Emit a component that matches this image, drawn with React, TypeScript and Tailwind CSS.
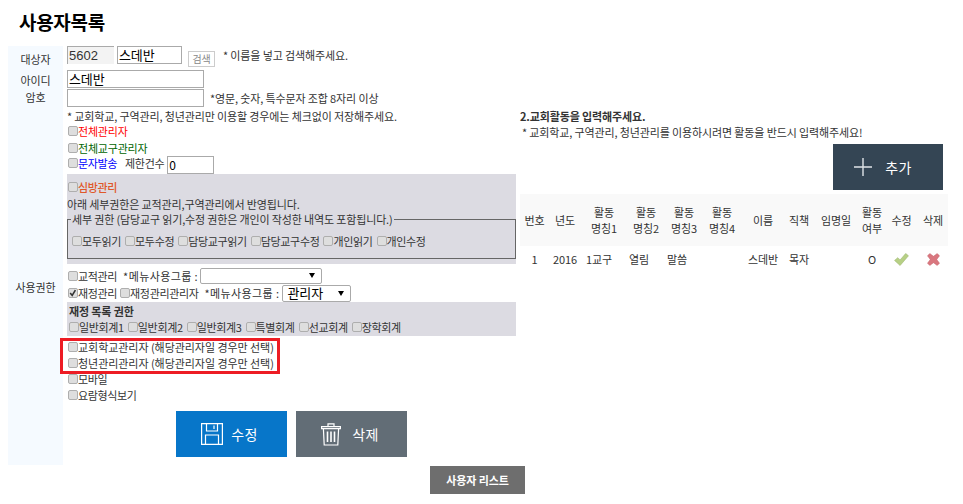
import React from "react";

const font = "font-['Noto_Sans_CJK_KR','Noto_Sans',sans-serif]";

function Check({ checked = false }: { checked?: boolean }) {
  return (
    <span className="relative inline-block w-[10px] h-[10px] ml-px align-[0px] rounded-[2px] border border-[#aeaeae] bg-[#dedede]">
      {checked && (
        <svg viewBox="0 0 10 10" className="absolute left-0 top-0 w-[8px] h-[8px]">
          <path d="M1.5 5 L4 8 L8 1.5" fill="none" stroke="#333" strokeWidth="2" />
        </svg>
      )}
    </span>
  );
}

function Item({ label, checked, className = "tracking-[-0.35px]" }: { label: string; checked?: boolean; className?: string }) {
  return (
    <span className={`whitespace-nowrap ${className}`}>
      <Check checked={checked} />
      {label}
    </span>
  );
}

function SelectBox({ value, className }: { value?: string; className: string }) {
  return (
    <span className={`inline-flex items-center justify-between bg-white border border-[#aaa] rounded-[2px] pl-1 pr-[6px] text-[13px] text-black ${className}`}>
      <span>{value}</span>
      <span className="w-0 h-0 border-x-[3px] border-x-transparent border-t-[5px] border-t-black" />
    </span>
  );
}

function SaveIcon() {
  return (
    <svg viewBox="0 0 22 22" className="w-[22px] h-[22px]" fill="none" stroke="#fff" strokeWidth="1.2">
      <path d="M0.6 0.6 H21.4 V21.4 H0.6 Z" />
      <path d="M5.5 0.6 V8 H16.5 V0.6" />
      <path d="M13 2.5 V6" />
      <path d="M4.5 21.4 V12 H17.5 V21.4" />
    </svg>
  );
}

function TrashIcon() {
  return (
    <svg viewBox="0 0 20 23" className="w-[20px] h-[23px]" fill="none" stroke="#fff" strokeWidth="1.2">
      <path d="M0.6 3.6 H19.4 V5.6 H0.6 Z" />
      <path d="M7 3.6 V0.8 H13 V3.6" />
      <path d="M2.4 5.6 L3.2 22 H16.8 L17.6 5.6" />
      <path d="M6.5 8.5 V19 M10 8.5 V19 M13.5 8.5 V19" strokeWidth="1.6" />
    </svg>
  );
}

const headers = ["번호", "년도", "활동\n명칭1", "활동\n명칭2", "활동\n명칭3", "활동\n명칭4", "이름", "직책", "임명일", "활동\n여부", "수정", "삭제"];
const widths = ["w-[29px]", "w-[32px]", "w-[46px]", "w-[38px]", "w-[38px]", "w-[38px]", "w-[44px]", "w-[28px]", "w-[46px]", "w-[26px]", "w-[33px]", "w-[30px]"];

export default function App() {
  return (
    <div className={`${font} w-[963px] h-[504px] bg-white text-[#333] text-[11px] leading-[16px] tracking-[-0.13px] overflow-hidden`}>
      <h2 className="pl-[19px] pt-[10px] h-[46px] text-[19px] leading-[24px] tracking-[-0.3px] font-bold text-black">사용자목록</h2>

      <div className="flex">
        <div className="ml-2 w-[508px]">
          <div className="grid grid-cols-[55px_1fr]">
            {/* 대상자 */}
            <div className="h-[24px] bg-[#f5faff] text-center pt-[5px]">대상자</div>
            <div className="pl-[4px] flex items-start h-[24px]">
              <span className="w-[47px] h-[18px] bg-[#f3f3f3] border-l border-t border-[#aaa] pl-px font-['Liberation_Sans',sans-serif] text-[13px] leading-[18px] tracking-normal">5602</span>
              <span className="ml-[3px] w-[65px] h-[18px] border border-[#aaa] text-[13px] leading-[15px] pl-px text-black">스데반</span>
              <span className="ml-[6px] mt-[5px] w-[27px] h-[16px] border border-[#ccc] text-center text-[10px] leading-[14px] text-[#888]">검색</span>
              <span className="ml-[8px] mt-px">* 이름을 넣고 검색해주세요.</span>
            </div>
            {/* 아이디 */}
            <div className="h-[19px] bg-[#f5faff] text-center pt-[2px]">아이디</div>
            <div className="pl-[4px] h-[19px]">
              <div className="w-[137px] h-[18px] border border-[#aaa] text-[13px] leading-[15px] pl-px text-black">스데반</div>
            </div>
            {/* 암호 */}
            <div className="h-[19px] bg-[#f5faff] text-center">암호</div>
            <div className="pl-[4px] h-[19px] flex items-start">
              <div className="w-[137px] h-[18px] border border-[#aaa]" />
              <span className="ml-[6px] mt-[1px]">*영문, 숫자, 특수문자 조합 8자리 이상</span>
            </div>
            {/* 사용권한 */}
            <div className="bg-[#f5faff] flex items-center justify-center h-[357px]">사용권한</div>
            <div className="pl-[4px]">
              <div className="h-[16px]">* 교회학교, 구역관리, 청년관리만 이용할 경우에는 체크없이 저장해주세요.</div>
              <div className="h-[16px] mt-[-1px]"><Item label="전체관리자" className="tracking-[-0.2px] text-[#ff0000]" /></div>
              <div className="h-[16px] mt-[1px]"><Item label="전체교구관리자" className="tracking-[-0.2px] text-[#006400]" /></div>
              <div className="h-[18px] flex items-start">
                <Item label="문자발송" className="tracking-[-0.35px] text-[#0000ff] leading-[14px]" />
                <span className="ml-[8px] leading-[14px] tracking-[-0.35px]">제한건수</span>
                <span className="ml-[3px] w-[47px] h-[18px] border border-[#aaa] text-[12px] leading-[16px] pl-px text-black">0</span>
              </div>

              <div className="bg-[#dcdbe2] h-[90px] w-[449px] pt-[5px]">
                <div className="h-[16px] font-medium"><Item label="심방관리" className="tracking-[-0.35px] text-[#e0582a]" /></div>
                <div className="h-[17px] mt-px">아래 세부권한은 교적관리,구역관리에서 반영됩니다.</div>
                <fieldset className="h-[47px] border border-[#666] mt-[-1px] px-[3px]">
                  <legend className="px-px leading-[15px] tracking-[-0.15px]">세부 권한 (담당교구 읽기,수정 권한은 개인이 작성한 내역도 포함됩니다.)</legend>
                  <div className="flex gap-[3px] mt-[6px]">
                    <Item label="모두읽기" />
                    <Item label="모두수정" />
                    <Item label="담당교구읽기" />
                    <Item label="담당교구수정" />
                    <Item label="개인읽기" />
                    <Item label="개인수정" />
                  </div>
                </fieldset>
              </div>

              <div className="h-[17px] mt-[3px] flex items-center">
                <Item label="교적관리" />
                <span className="ml-[6px] tracking-[0.4px]">*메뉴사용그룹 :</span>
                <SelectBox className="ml-[2px] w-[122px] h-[16px]" />
              </div>
              <div className="h-[18px] flex items-center">
                <Item label="재정관리" checked />
                <Item label="재정관리관리자" className="ml-[2px] tracking-[-0.35px]" />
                <span className="ml-[6px] tracking-[0.4px]">*메뉴사용그룹 :</span>
                <SelectBox value="관리자" className="ml-[3px] w-[69px] h-[17px] leading-[14px]" />
              </div>

              <div className="bg-[#dcdbe2] h-[34px] w-[449px] pt-px">
                <div className="pl-[2px] h-[16px] font-bold">재정 목록 권한</div>
                <div className="pl-px flex gap-[3px]">
                  <Item label="일반회계1" />
                  <Item label="일반회계2" />
                  <Item label="일반회계3" />
                  <Item label="특별회계" />
                  <Item label="선교회계" />
                  <Item label="장학회계" />
                </div>
              </div>

              <div className="relative mt-[3px]">
                <div className="h-[16px]"><Item label="교회학교관리자 (해당관리자일 경우만 선택)" className="tracking-[-0.05px]" /></div>
                <div className="h-[16px]"><Item label="청년관리관리자 (해당관리자일 경우만 선택)" className="tracking-[-0.05px]" /></div>
                <div className="absolute left-[-7px] top-[-1px] w-[220px] h-[36px] border-[3px] border-[#ed1c24]" />
              </div>
              <div className="h-[16px]"><Item label="모바일" /></div>
              <div className="h-[16px]"><Item label="요람형식보기" /></div>

              <div className="flex gap-[9px] ml-[109px] mt-[8px]">
                <div className="w-[111px] h-[46px] bg-[#0776c9] flex items-center justify-center gap-[8px] pr-[4px] text-white text-[14px] tracking-[0.3px]">
                  <SaveIcon />
                  <span>수정</span>
                </div>
                <div className="w-[111px] h-[46px] bg-[#626d76] flex items-center justify-center gap-[11px] pr-[3px] text-white text-[14px] tracking-[0.3px]">
                  <TrashIcon />
                  <span>삭제</span>
                </div>
              </div>
            </div>
          </div>
        </div>

        <div className="ml-[4px] w-[428px] pt-[62px]">
          <div className="font-bold h-[16px]">2.교회활동을 입력해주세요.</div>
          <div className="pl-[2px] h-[16px]">* 교회학교, 구역관리, 청년관리를 이용하시려면 활동을 반드시 입력해주세요!</div>
          <div className="flex justify-end pr-[5px] mt-[4px]">
            <div className="w-[110px] h-[46px] bg-[#344554] text-white flex items-center justify-center gap-[13px] pr-[10px] text-[14px] tracking-[0.3px]">
              <svg viewBox="0 0 18 18" className="w-[18px] h-[18px]" stroke="#dfe3e7" strokeWidth="1.4">
                <path d="M9 0 V18 M0 9 H18" />
              </svg>
              <span>추가</span>
            </div>
          </div>
          <table className="mt-[4px] w-[428px] table-fixed border-collapse">
            <thead>
              <tr className="bg-[#f9f9f9] h-[52px]">
                {headers.map((h, i) => (
                  <th key={h} className={`${widths[i]} font-normal text-center whitespace-pre-line leading-[16px] p-0`}>{h}</th>
                ))}
              </tr>
            </thead>
            <tbody>
              <tr className="h-[26px] text-center">
                <td className="p-0">1</td>
                <td className="p-0">2016</td>
                <td className="p-0 text-left pl-[5px]">1교구</td>
                <td className="p-0 text-left pl-[2px]">열림</td>
                <td className="p-0 text-left pl-[2px]">말씀</td>
                <td className="p-0"></td>
                <td className="p-0">스데반</td>
                <td className="p-0">목자</td>
                <td className="p-0"></td>
                <td className="p-0">O</td>
                <td className="p-0">
                  <svg viewBox="0 0 16 14" className="w-[15px] h-[13px] mx-auto">
                    <path d="M0.5 8 L4 5 L6.5 7.5 L12.5 0.5 L15.5 3 L6.5 13.5 Z" fill="#b7d085" stroke="#9cb56f" strokeWidth="0.6" />
                  </svg>
                </td>
                <td className="p-0">
                  <svg viewBox="0 0 14 14" className="w-[13px] h-[13px] mx-auto">
                    <path d="M3 0.5 L7 3.5 L11 0.5 L13.5 3 L10.5 7 L13.5 11 L11 13.5 L7 10.5 L3 13.5 L0.5 11 L3.5 7 L0.5 3 Z" fill="#d9777f" stroke="#c7646c" strokeWidth="0.5" />
                  </svg>
                </td>
              </tr>
            </tbody>
          </table>
        </div>
      </div>

      <div className="flex ml-[430px] mt-[1px]">
        <div className="w-[95px] h-[28px] bg-[#6e6e6e] text-white font-bold text-center leading-[28px]">사용자 리스트</div>
      </div>
    </div>
  );
}
